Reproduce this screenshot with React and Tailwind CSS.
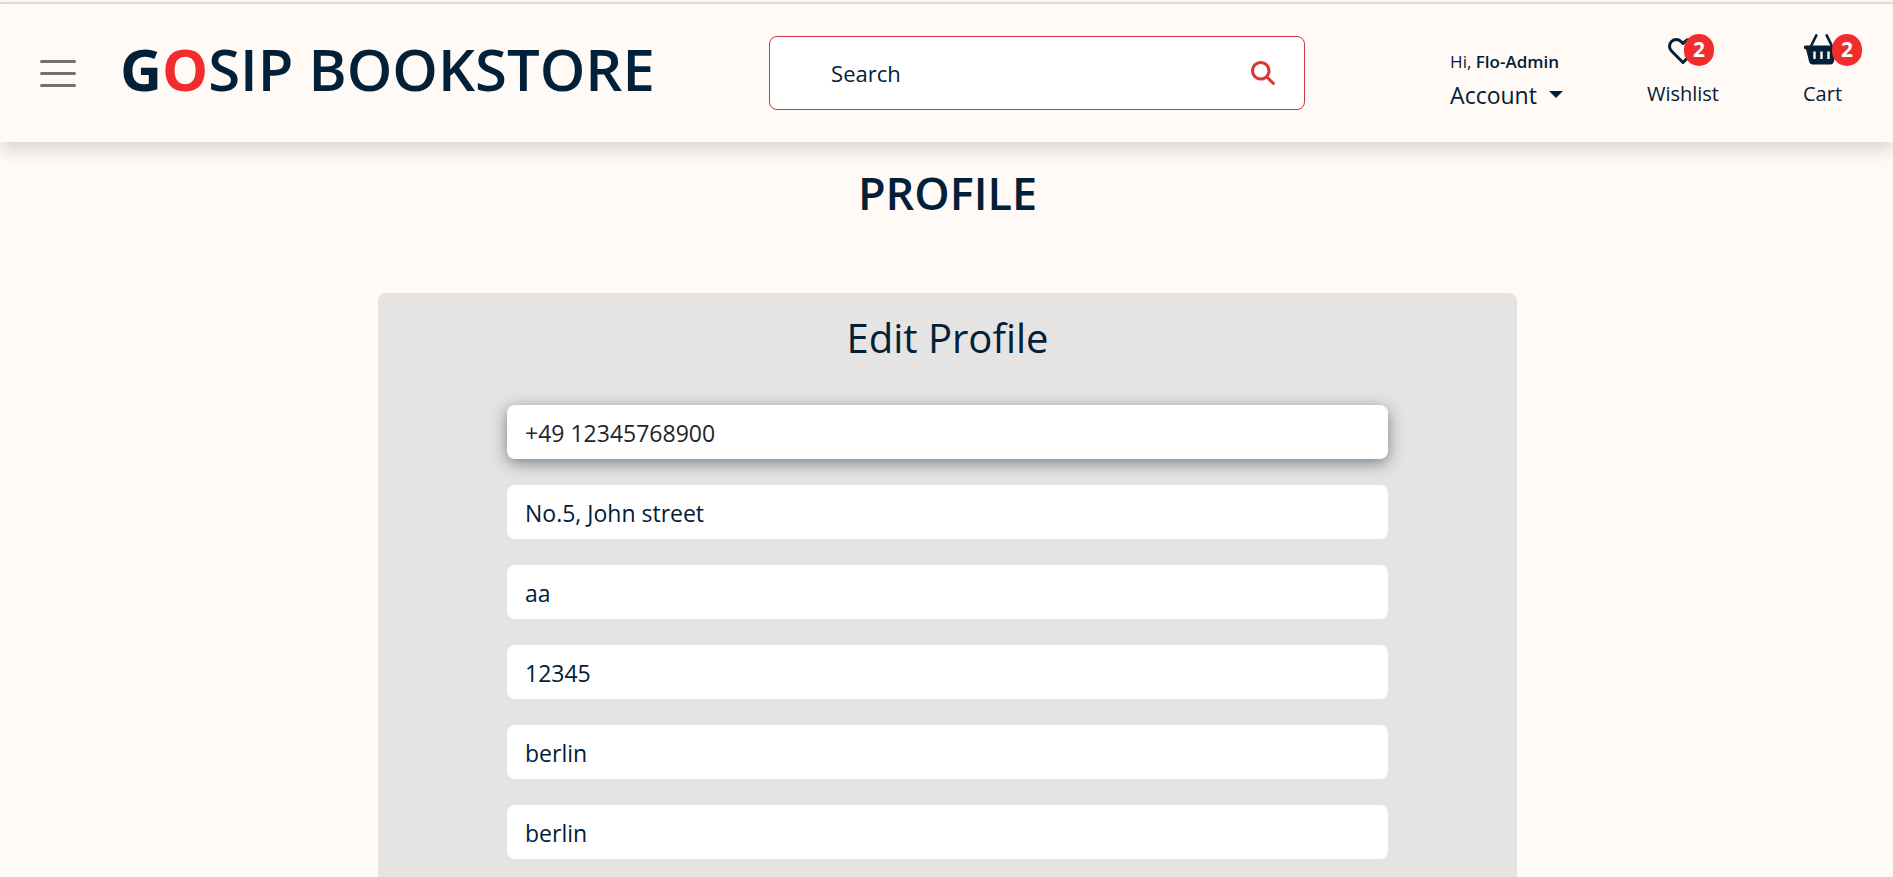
import { FaMagnifyingGlass } from "react-icons/fa6";
import { HiOutlineHeart } from "react-icons/hi";

const fields = [
  { id: "phone", label: "Phone", value: "+49 12345768900" },
  { id: "street", label: "Street", value: "No.5, John street" },
  { id: "address", label: "Address line", value: "aa" },
  { id: "postcode", label: "Postcode", value: "12345" },
  { id: "city", label: "City", value: "berlin" },
  { id: "county", label: "County", value: "berlin" },
];

function BasketIcon() {
  return (
    <svg width="35" height="31" viewBox="0 0 35 31" aria-hidden="true">
      <path
        d="M12.3 1.4L6.8 12.5M22.7 1.4l5.5 11.1"
        fill="none"
        stroke="currentColor"
        strokeWidth="2.6"
        strokeLinecap="round"
      />
      <path
        fill="currentColor"
        fillRule="evenodd"
        d="M1.8 11.6h31.4a1.8 1.8 0 0 1 .6 3.6l-.9.3-3 12.1a3.8 3.8 0 0 1-3.7 3H8.8a3.8 3.8 0 0 1-3.7-3l-3-12.1-.9-.3a1.8 1.8 0 0 1 .6-3.6zM9.3 17.6v7.4h2.4v-7.4zM16.3 17.6v7.4h2.4v-7.4zM23.3 17.6v7.4h2.4v-7.4z"
      />
    </svg>
  );
}

function Badge({ children }) {
  return (
    <span className="flex h-8 w-[30px] items-center justify-center rounded-full bg-[#f22c2c] text-[21px] leading-none font-bold text-white">
      {children}
    </span>
  );
}

function Header() {
  return (
    <header className="flex h-[140px] w-full items-center border-t-2 border-[#dddbd9] bg-[#fffaf5] pr-[31px] pl-10 shadow-[0_8px_16px_rgba(0,0,0,0.15)]">
      <button type="button" aria-label="Open menu" className="flex w-9 flex-col gap-[9px]">
        <span className="h-[3px] rounded-full bg-[#77716d]" />
        <span className="h-[3px] rounded-full bg-[#77716d]" />
        <span className="h-[3px] rounded-full bg-[#77716d]" />
      </button>
      <a href="#" className="ml-11 pb-2 text-[58px] leading-[76px] font-semibold whitespace-nowrap">
        <span className="font-bold">G</span>
        <span className="font-bold text-[#f22c2c]">O</span>SIP BOOKSTORE
      </a>
      <form className="ml-auto flex h-[74px] w-[536px] items-center rounded-lg border border-[#c9383d] bg-white pr-[29px] pl-[61px]">
        <input
          type="text"
          aria-label="Search"
          placeholder="Search"
          className="min-w-0 flex-1 bg-transparent text-[22px] outline-none placeholder:text-[#022038] placeholder:opacity-100"
        />
        <button type="submit" aria-label="Submit search" className="text-[#d93838]">
          <FaMagnifyingGlass size={24} />
        </button>
      </form>
      <div className="ml-[145px] flex flex-col items-start gap-px pt-[14px]">
        <p className="text-[17px] leading-7 whitespace-nowrap">
          Hi, <span className="font-semibold">Flo-Admin</span>
        </p>
        <button type="button" className="flex items-center gap-3 text-[23px] leading-9">
          Account
          <svg width="14" height="7" viewBox="0 0 14 7" fill="currentColor" aria-hidden="true">
            <path d="M0 0h14L7 7z" />
          </svg>
        </button>
      </div>
      <a href="#" className="ml-[84px] flex flex-col items-center gap-[14px] pb-[5px] text-[20px] leading-7">
        <span className="relative flex h-8 w-9 items-center">
          <HiOutlineHeart size={36} className="shrink-0" />
          <span className="absolute top-0 left-[19px]">
            <Badge>2</Badge>
          </span>
        </span>
        Wishlist
      </a>
      <a href="#" className="ml-[84px] flex flex-col items-start gap-[14px] pb-[5px] text-[20px] leading-7">
        <span className="relative flex h-8 w-[59px] items-start pl-px">
          <BasketIcon />
          <span className="absolute top-0 left-[29px]">
            <Badge>2</Badge>
          </span>
        </span>
        Cart
      </a>
    </header>
  );
}

export default function App() {
  return (
    <div className="flex min-h-screen flex-col bg-[#fffaf5] pt-[2px] font-['Open_Sans','Noto_Sans',sans-serif] text-[#022038]">
      <Header />
      <main className="flex flex-1 flex-col items-center pl-[2px]">
        <h1 className="mt-[21px] text-[45px] leading-[60px] font-semibold">PROFILE</h1>
        <section className="mt-[70px] flex w-full max-w-[1139px] flex-1 flex-col rounded-t-lg bg-[#e5e4e3] px-[129px] pt-[15px]">
          <h2 className="text-center text-[40px] leading-[60px]">Edit Profile</h2>
          <form className="mt-[37px] flex flex-col gap-[26px]">
            {fields.map((field) => (
              <input
                key={field.id}
                id={field.id}
                type="text"
                aria-label={field.label}
                defaultValue={field.value}
                className="h-[54px] w-full rounded-lg bg-white px-[18px] pt-[2px] text-[23px] outline-none first:text-[#212529] first:shadow-[0_4px_16px_rgba(2,32,56,0.5)]"
              />
            ))}
          </form>
        </section>
      </main>
    </div>
  );
}
